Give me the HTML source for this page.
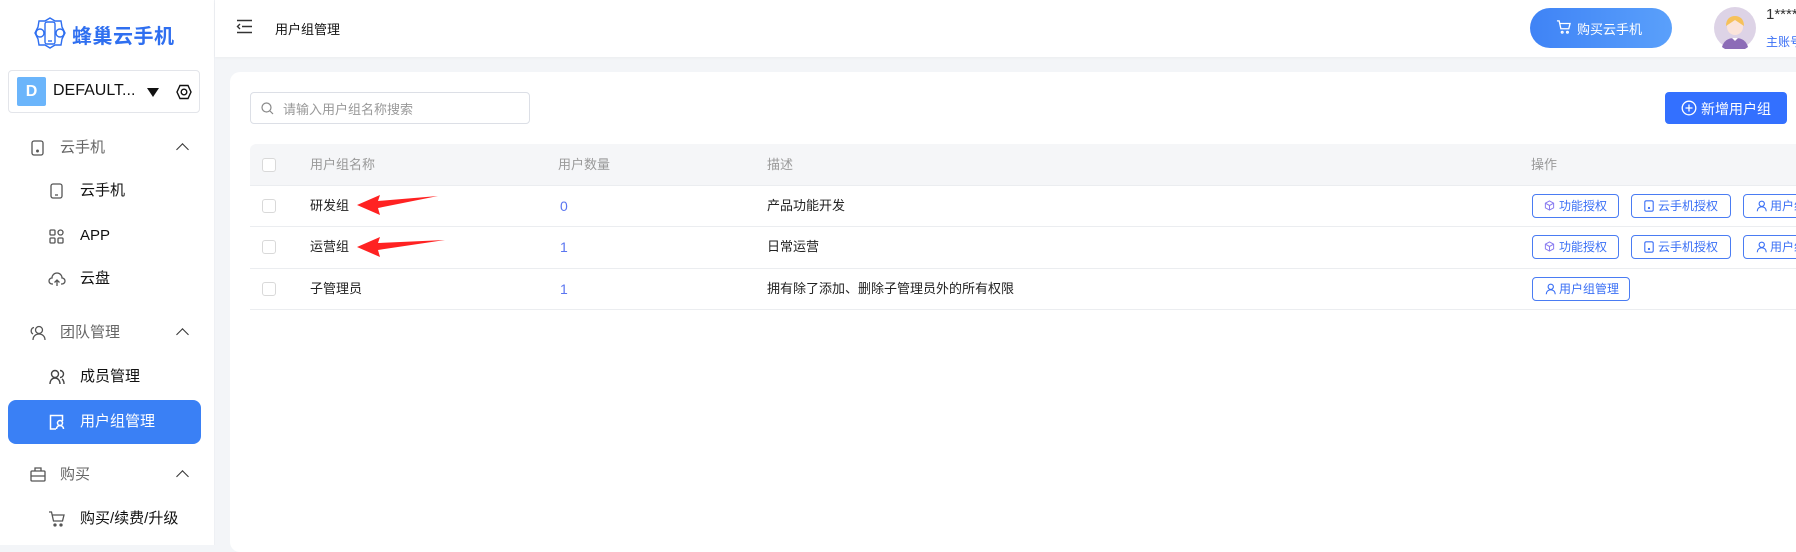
<!DOCTYPE html>
<html><head><meta charset="utf-8"><style>
*{margin:0;padding:0;box-sizing:border-box}
body{width:1796px;height:545px;overflow:hidden;background:#f3f5f8;font-family:"Liberation Sans","Noto Sans CJK SC",sans-serif;position:relative;color:#222}
.abs{position:absolute;white-space:nowrap}
.side{left:0;top:0;width:215px;height:545px;background:#fff;border-right:1px solid #eef0f4}
.logo{left:72px;top:20px;font-size:20px;font-weight:bold;color:#2f6ff0;letter-spacing:0.5px}
.sel{left:8px;top:70px;width:192px;height:43px;border:1px solid #e3e5ea;border-radius:4px}
.badge{left:8px;top:6px;width:29px;height:29px;background:#6bb5fb;color:#fff;font-weight:bold;font-size:16px;text-align:center;line-height:29px;border-radius:2px}
.mi{font-size:15px;line-height:20px}
.g{color:#666}
.s{color:#111}
.chev{left:178px;width:9px;height:9px;border-left:1.3px solid #333;border-top:1.3px solid #333;transform:rotate(45deg)}
.active{left:8px;top:400px;width:193px;height:44px;background:#3a80f5;border-radius:8px}
.hdr{left:215px;top:0;width:1581px;height:57px;background:#fff;box-shadow:0 1px 3px rgba(0,0,0,.04)}
.card{left:230px;top:72px;width:1580px;height:480px;background:#fff;border-radius:10px}
.th{color:#999;font-size:13px;line-height:20px}
.td{font-size:13px;color:#222;line-height:20px}
.num{font-size:14px;color:#5a75f0;line-height:20px}
.cb{width:14px;height:14px;border:1px solid #d9d9d9;border-radius:3px;background:#fff}
.btn{height:24px;border:1px solid #4a7cf3;border-radius:4px;color:#3a6ff5;font-size:12px;line-height:22px;padding-left:26px;overflow:hidden}
.line{left:250px;width:1546px;height:1px;background:#ebedf0}
</style></head><body>
<div class="abs side"></div>
<svg class="abs" style="left:34px;top:17px" width="32" height="32" viewBox="0 0 32 32" fill="none" stroke="#2f6ff0" stroke-width="1.4"><polygon points="16,1 21,4 27,4 28,10 31,16 28,22 27,28 21,28 16,31 11,28 5,28 4,22 1,16 4,10 5,4 11,4"/><rect x="11" y="5" width="10" height="22" rx="2"/><line x1="14" y1="24" x2="18" y2="24"/><circle cx="6" cy="16" r="4"/><circle cx="26" cy="16" r="4"/></svg>
<div class="abs logo">蜂巢云手机</div>
<div class="abs sel"><div class="abs badge">D</div><div class="abs" style="left:44px;top:11px;font-size:16px;color:#111">DEFAULT...</div>
<div class="abs" style="left:138px;top:17px;width:0;height:0;border-left:6px solid transparent;border-right:6px solid transparent;border-top:9px solid #111"></div>
<svg class="abs" style="left:167px;top:13px" width="16" height="16" viewBox="0 0 16 16" fill="none" stroke="#111" stroke-width="1.4"><polygon points="4,1.5 12,1.5 15,8 12,14.5 4,14.5 1,8"/><circle cx="8" cy="8" r="2.8"/></svg></div>

<svg class="abs" style="left:31px;top:140px" width="13" height="16" viewBox="0 0 13 16" fill="none" stroke="#555" stroke-width="1.3"><rect x="1" y="1" width="11" height="14" rx="2"/><circle cx="6.5" cy="11" r="0.8" fill="#555"/></svg>
<div class="abs mi g" style="left:60px;top:138px">云手机</div><div class="abs chev" style="top:145px"></div>
<svg class="abs" style="left:50px;top:183px" width="13" height="16" viewBox="0 0 13 16" fill="none" stroke="#555" stroke-width="1.3"><rect x="1" y="1" width="11" height="14" rx="2"/><line x1="5" y1="12" x2="8" y2="12"/></svg>
<div class="abs mi s" style="left:80px;top:181px">云手机</div>
<svg class="abs" style="left:49px;top:229px" width="15" height="15" viewBox="0 0 15 15" fill="none" stroke="#555" stroke-width="1.3"><rect x="1" y="1" width="5" height="5" rx="1"/><rect x="9" y="1" width="5" height="5" rx="2.5"/><rect x="1" y="9" width="5" height="5" rx="1"/><rect x="9" y="9" width="5" height="5" rx="1"/></svg>
<div class="abs mi s" style="left:80px;top:226px">APP</div>
<svg class="abs" style="left:48px;top:272px" width="18" height="15" viewBox="0 0 18 15" fill="none" stroke="#555" stroke-width="1.3"><path d="M5 12H4a3 3 0 0 1 0-6 5 5 0 0 1 10 0 3 3 0 0 1 0 6h-1"/><path d="M9 14V8M6.5 10.5 9 8l2.5 2.5"/></svg>
<div class="abs mi s" style="left:80px;top:269px">云盘</div>

<svg class="abs" style="left:30px;top:325px" width="16" height="16" viewBox="0 0 16 16" fill="none" stroke="#555" stroke-width="1.3"><circle cx="9" cy="5" r="3.5"/><path d="M3 15c0-3.5 2.5-6 6-6s6 2.5 6 6M4 2.5A3.5 3.5 0 0 0 3 9"/></svg>
<div class="abs mi g" style="left:60px;top:323px">团队管理</div><div class="abs chev" style="top:330px"></div>
<svg class="abs" style="left:49px;top:369px" width="16" height="16" viewBox="0 0 16 16" fill="none" stroke="#444" stroke-width="1.4"><circle cx="6" cy="5" r="3.5"/><path d="M1 15c0-3.5 2-6 5-6s5 2.5 5 6M11 1.5a3.5 3.5 0 0 1 0 7M13 10c1.5 1 2 3 2 5"/></svg>
<div class="abs mi s" style="left:80px;top:367px">成员管理</div>
<div class="abs active"></div>
<svg class="abs" style="left:49px;top:414px" width="16" height="16" viewBox="0 0 16 16" fill="none" stroke="#fff" stroke-width="1.5"><path d="M7 15H1.5V1.5h12V7"/><circle cx="11" cy="9" r="2.5"/><path d="M7.5 15c0-2 1.5-3.5 3.5-3.5s3.5 1.5 3.5 3.5"/></svg>
<div class="abs mi" style="left:80px;top:412px;color:#fff">用户组管理</div>
<svg class="abs" style="left:30px;top:467px" width="16" height="15" viewBox="0 0 16 15" fill="none" stroke="#555" stroke-width="1.3"><rect x="1" y="4" width="14" height="10" rx="1"/><path d="M5 4V1h6v3M1 9h14"/></svg>
<div class="abs mi g" style="left:60px;top:465px">购买</div><div class="abs chev" style="top:472px"></div>
<svg class="abs" style="left:48px;top:511px" width="17" height="16" viewBox="0 0 17 16" fill="none" stroke="#555" stroke-width="1.3"><path d="M1 1h2.5l2 9h9l1.5-6H4.5"/><circle cx="7" cy="14" r="1" fill="#555"/><circle cx="13" cy="14" r="1" fill="#555"/></svg>
<div class="abs mi s" style="left:80px;top:509px">购买/续费/升级</div>

<div class="abs hdr"></div>
<svg class="abs" style="left:236px;top:19px" width="17" height="15" viewBox="0 0 17 15" fill="none" stroke="#333" stroke-width="1.4"><path d="M1 1.5h15M6 7.5h10M1 13.5h15M4 5 1.5 7.5 4 10"/></svg>
<div class="abs" style="left:275px;top:19px;font-size:13px;color:#111">用户组管理</div>
<div class="abs" style="left:1530px;top:8px;width:142px;height:40px;border-radius:20px;background:linear-gradient(90deg,#3f83f6,#5aa0fb)"></div>
<svg class="abs" style="left:1556px;top:20px" width="15" height="14" viewBox="0 0 17 16" fill="none" stroke="#fff" stroke-width="1.5"><path d="M1 1h2.5l2 9h9l1.5-6H4.5"/><circle cx="7" cy="14" r="1"/><circle cx="13" cy="14" r="1"/></svg>
<div class="abs" style="left:1577px;top:19px;font-size:13px;color:#fff">购买云手机</div>
<svg class="abs" style="left:1714px;top:7px" width="42" height="42" viewBox="0 0 42 42"><circle cx="21" cy="21" r="21" fill="#ddd3e6"/><path d="M8 40c2-7 7-9 13-9s11 2 13 9a21 21 0 0 1-26 0z" fill="#8c6cb7"/><circle cx="21" cy="20" r="8" fill="#fbe4da"/><path d="M12 19c0-7 4-10 9-10s9 3 9 10c-3-2-6-4-9-6-3 2-6 4-9 6z" fill="#f6c15a"/><path d="M18 31l3 3 3-3z" fill="#fff"/></svg>
<div class="abs" style="left:1766px;top:6px;font-size:15px;color:#333">1****</div>
<div class="abs" style="left:1766px;top:33px;font-size:12px;color:#3a6ff5">主账号</div>

<div class="abs card"></div>
<div class="abs" style="left:250px;top:92px;width:280px;height:32px;border:1px solid #dcdfe6;border-radius:4px"></div>
<svg class="abs" style="left:261px;top:102px" width="13" height="13" viewBox="0 0 13 13" fill="none" stroke="#888" stroke-width="1.2"><circle cx="5.5" cy="5.5" r="4.5"/><path d="M9 9l3 3"/></svg>
<div class="abs" style="left:283px;top:99px;font-size:13px;color:#999">请输入用户组名称搜索</div>
<div class="abs" style="left:1665px;top:92px;width:122px;height:32px;background:#3370ff;border-radius:4px"></div>
<svg class="abs" style="left:1681px;top:100px" width="16" height="16" viewBox="0 0 16 16" fill="none" stroke="#fff" stroke-width="1.3"><circle cx="8" cy="8" r="6.8"/><path d="M8 4.5v7M4.5 8h7"/></svg>
<div class="abs" style="left:1701px;top:99px;font-size:14px;color:#fff">新增用户组</div>

<div class="abs" style="left:250px;top:144px;width:1546px;height:42px;background:#f5f6f8;border-radius:6px 0 0 0"></div>
<div class="abs cb" style="left:262px;top:158px"></div>
<div class="abs th" style="left:310px;top:155px">用户组名称</div>
<div class="abs th" style="left:558px;top:155px">用户数量</div>
<div class="abs th" style="left:767px;top:155px">描述</div>
<div class="abs th" style="left:1531px;top:155px">操作</div>
<div class="abs line" style="top:185px"></div>
<div class="abs line" style="top:226px"></div>
<div class="abs line" style="top:268px"></div>
<div class="abs line" style="top:309px"></div>

<div class="abs cb" style="left:262px;top:199px"></div>
<div class="abs td" style="left:310px;top:196px">研发组</div>
<div class="abs num" style="left:560px;top:196px">0</div>
<div class="abs td" style="left:767px;top:196px">产品功能开发</div>
<div class="abs cb" style="left:262px;top:240px"></div>
<div class="abs td" style="left:310px;top:237px">运营组</div>
<div class="abs num" style="left:560px;top:237px">1</div>
<div class="abs td" style="left:767px;top:237px">日常运营</div>
<div class="abs cb" style="left:262px;top:282px"></div>
<div class="abs td" style="left:310px;top:279px">子管理员</div>
<div class="abs num" style="left:560px;top:279px">1</div>
<div class="abs td" style="left:767px;top:279px">拥有除了添加、删除子管理员外的所有权限</div>

<svg class="abs" style="left:350px;top:190px" width="100" height="70" viewBox="0 0 100 70"><polygon points="7,15 30,5 28,11 88,6 28,18 30,25" fill="#f22"/><polygon points="7,57 30,47 28,53 95,50 28,60 30,67" fill="#f22"/></svg>

<div class="abs btn" style="left:1532px;top:194px;width:87px">功能授权</div>
<div class="abs btn" style="left:1631px;top:194px;width:100px">云手机授权</div>
<div class="abs btn" style="left:1743px;top:194px;width:80px">用户组</div>
<div class="abs btn" style="left:1532px;top:235px;width:87px">功能授权</div>
<div class="abs btn" style="left:1631px;top:235px;width:100px">云手机授权</div>
<div class="abs btn" style="left:1743px;top:235px;width:80px">用户组</div>
<div class="abs btn" style="left:1532px;top:277px;width:98px">用户组管理</div>
<svg class="abs" style="left:1544px;top:200px" width="11" height="11" viewBox="0 0 12 12" fill="none" stroke="#8a7cf0" stroke-width="1.1"><path d="M6 1l4.5 2.5v5L6 11 1.5 8.5v-5zM1.5 3.5 6 6l4.5-2.5M6 6v5"/></svg>
<svg class="abs" style="left:1544px;top:241px" width="11" height="11" viewBox="0 0 12 12" fill="none" stroke="#8a7cf0" stroke-width="1.1"><path d="M6 1l4.5 2.5v5L6 11 1.5 8.5v-5zM1.5 3.5 6 6l4.5-2.5M6 6v5"/></svg>
<svg class="abs" style="left:1644px;top:200px" width="10" height="12" viewBox="0 0 10 12" fill="none" stroke="#3a6ff5" stroke-width="1.1"><rect x="0.8" y="0.8" width="8.4" height="10.4" rx="1.5"/><circle cx="5" cy="8" r=".6" fill="#3a6ff5"/></svg>
<svg class="abs" style="left:1644px;top:241px" width="10" height="12" viewBox="0 0 10 12" fill="none" stroke="#3a6ff5" stroke-width="1.1"><rect x="0.8" y="0.8" width="8.4" height="10.4" rx="1.5"/><circle cx="5" cy="8" r=".6" fill="#3a6ff5"/></svg>
<svg class="abs" style="left:1755px;top:200px" width="12" height="12" viewBox="0 0 16 16" fill="none" stroke="#3a6ff5" stroke-width="1.5"><circle cx="9" cy="5" r="3.5"/><path d="M3 15c0-3.5 2.5-6 6-6s6 2.5 6 6"/></svg>
<svg class="abs" style="left:1755px;top:241px" width="12" height="12" viewBox="0 0 16 16" fill="none" stroke="#3a6ff5" stroke-width="1.5"><circle cx="9" cy="5" r="3.5"/><path d="M3 15c0-3.5 2.5-6 6-6s6 2.5 6 6"/></svg>
<svg class="abs" style="left:1544px;top:283px" width="12" height="12" viewBox="0 0 16 16" fill="none" stroke="#3a6ff5" stroke-width="1.5"><circle cx="9" cy="5" r="3.5"/><path d="M3 15c0-3.5 2.5-6 6-6s6 2.5 6 6"/></svg>
</body></html>
